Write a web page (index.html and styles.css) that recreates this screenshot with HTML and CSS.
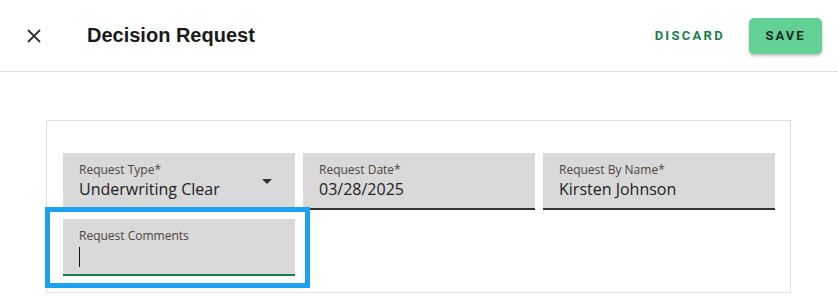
FILE: index.html
```html
<!DOCTYPE html>
<html lang="en">
<head>
    <meta charset="UTF-8">
    <meta name="viewport" content="width=device-width, initial-scale=1.0">
    <title>Decision Request</title>
    <link rel="stylesheet" href="styles.css">
</head>
<body>
    <header class="topbar">
        <button class="close-btn" aria-label="Close">
            <svg width="14" height="14" viewBox="0 0 14 14">
                <path d="M1 1 L13 13 M13 1 L1 13" stroke="#333" stroke-width="1.8" fill="none"/>
            </svg>
        </button>
        <h1 class="title">Decision Request</h1>
        <div class="actions">
            <button class="btn-discard">DISCARD</button>
            <button class="btn-save">SAVE</button>
        </div>
    </header>

    <main class="content">
        <div class="card">
            <div class="field-grid">
                <div class="field">
                    <label>Request Type*</label>
                    <div class="value">Underwriting Clear</div>
                    <span class="caret"></span>
                </div>
                <div class="field">
                    <label>Request Date*</label>
                    <div class="value">03/28/2025</div>
                </div>
                <div class="field">
                    <label>Request By Name*</label>
                    <div class="value">Kirsten Johnson</div>
                </div>
                <div class="field-wrap focused">
                    <div class="field active">
                        <label>Request Comments</label>
                        <div class="value"><span class="cursor"></span></div>
                    </div>
                </div>
            </div>
        </div>
    </main>
</body>
</html>
```

FILE: styles.css
```css
body {
    margin: 0;
    background: white;
    font-family: 'Liberation Sans', Arial, sans-serif;
    color: #222;
}

button {
    font-family: inherit;
    border: none;
    background: none;
    cursor: pointer;
}

.topbar {
    display: flex;
    align-items: center;
    height: 71px;
    border-bottom: 1px solid #e0e0e0;
    padding: 0 16px 0 20px;
}

.close-btn {
    width: 28px;
    height: 28px;
    padding: 0;
    display: flex;
    align-items: center;
    justify-content: center;
    margin-right: 39px;
}

.title {
    font-size: 20px;
    font-weight: bold;
    margin: 0;
    color: #1a1a1a;
    flex: 1;
}

.actions {
    display: flex;
    align-items: center;
    gap: 16px;
}

.btn-discard {
    font-family: Roboto, sans-serif;
    font-weight: bold;
    font-size: 13px;
    letter-spacing: 2.3px;
    color: #17804a;
    padding: 10px 8px;
}

.btn-save {
    font-family: Roboto, sans-serif;
    font-weight: bold;
    font-size: 13px;
    letter-spacing: 2px;
    color: #1c2e24;
    background: #63d095;
    width: 73px;
    height: 36px;
    border-radius: 5px;
    box-shadow: 0 2px 3px rgba(0, 0, 0, 0.25);
}

.content {
    padding: 48px 47px 0 46px;
}

.card {
    border: 1px solid #e0e0e0;
    padding: 32px 15px 16px 16px;
}

.field-grid {
    display: grid;
    grid-template-columns: repeat(3, 232px);
    gap: 9px 8px;
}

.field {
    position: relative;
    background: #d9d9d9;
    height: 55px;
    border-bottom: 2px solid #333;
    padding: 0 16px;
    font-family: 'Open Sans', 'Noto Sans', sans-serif;
}

.field label {
    display: block;
    font-size: 12px;
    color: #4a4540;
    padding-top: 9px;
    line-height: 16px;
}

.field .value {
    font-size: 16px;
    color: #222;
    line-height: 23px;
    height: 23px;
}

.caret {
    position: absolute;
    right: 23px;
    top: 26px;
    width: 0;
    height: 0;
    border-left: 5px solid transparent;
    border-right: 5px solid transparent;
    border-top: 5px solid #333;
}

.field-wrap {
    position: relative;
}

.field-wrap.focused::after {
    content: "";
    position: absolute;
    left: -18px;
    right: -15px;
    top: -12px;
    bottom: -12px;
    border: 5px solid #1ba1f2;
}

.field.active {
    border-bottom-color: #17804a;
}

.cursor {
    display: inline-block;
    width: 1px;
    height: 20px;
    background: #111;
    vertical-align: -5px;
    margin-top: 3px;
}
```
